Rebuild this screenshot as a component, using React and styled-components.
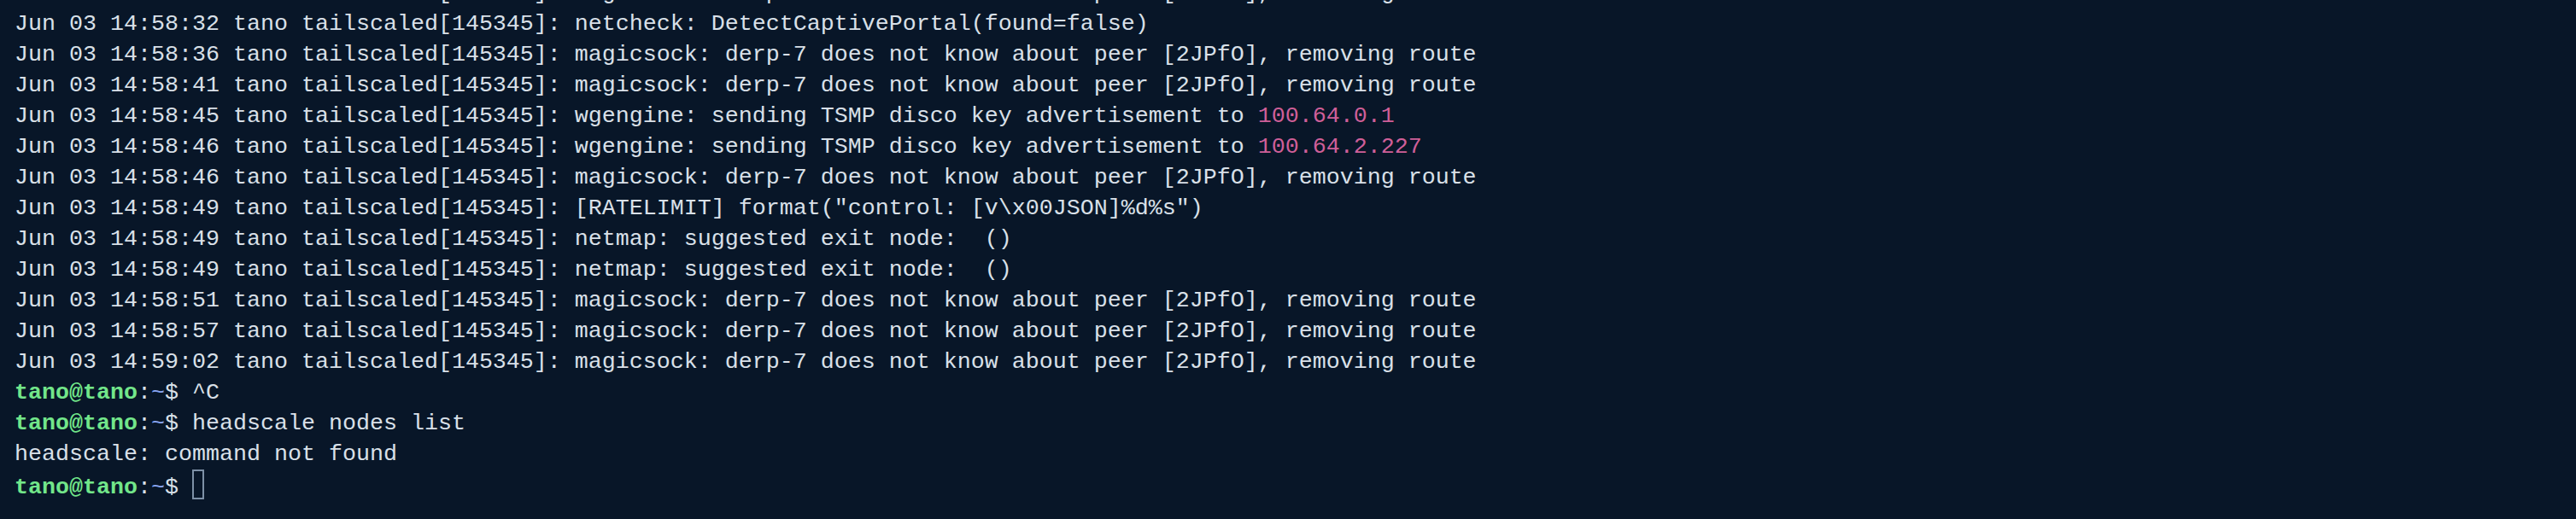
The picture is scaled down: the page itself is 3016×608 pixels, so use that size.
import styled, { createGlobalStyle } from "styled-components";

const GlobalStyle = createGlobalStyle`
  html, body {
    margin: 0;
    padding: 0;
    height: 608px;
    overflow: hidden;
    background: #081628;
  }
`;

const Terminal = styled.div`
  width: 3016px;
  height: 608px;
  box-sizing: border-box;
  background: #081628;
  color: #d9e0e8;
  font-family: "Liberation Mono", "DejaVu Sans Mono", monospace;
  font-size: 26.67px;
  line-height: 36px;
  padding: 0 0 22px 17px;
  display: flex;
  flex-direction: column;
  justify-content: flex-end;
  overflow: hidden;
`;

const Line = styled.div`
  white-space: pre;
  height: 36px;
  flex-shrink: 0;
`;

const Ip = styled.span`
  color: #cf5f98;
`;

const User = styled.span`
  color: #72e68a;
  font-weight: bold;
`;

const Path = styled.span`
  color: #8aa6f2;
`;

const Cursor = styled.span`
  display: inline-block;
  width: 14px;
  height: 35px;
  box-sizing: border-box;
  border: 2px solid #7d90a6;
  vertical-align: -7px;
`;

const prefix = (t) => `Jun 03 ${t} tano tailscaled[145345]: `;
const derp = "magicsock: derp-7 does not know about peer [2JPfO], removing route";

const logs = [
  { t: "14:58:28", msg: derp },
  { t: "14:58:32", msg: "netcheck: DetectCaptivePortal(found=false)" },
  { t: "14:58:36", msg: derp },
  { t: "14:58:41", msg: derp },
  { t: "14:58:45", msg: "wgengine: sending TSMP disco key advertisement to ", ip: "100.64.0.1" },
  { t: "14:58:46", msg: "wgengine: sending TSMP disco key advertisement to ", ip: "100.64.2.227" },
  { t: "14:58:46", msg: derp },
  { t: "14:58:49", msg: '[RATELIMIT] format("control: [v\\x00JSON]%d%s")' },
  { t: "14:58:49", msg: "netmap: suggested exit node:  ()" },
  { t: "14:58:49", msg: "netmap: suggested exit node:  ()" },
  { t: "14:58:51", msg: derp },
  { t: "14:58:57", msg: derp },
  { t: "14:59:02", msg: derp },
];

const Prompt = () => (
  <>
    <User>tano@tano</User>:<Path>~</Path>${" "}
  </>
);

export default function App() {
  return (
    <>
      <GlobalStyle />
      <Terminal>
        {logs.map((l, i) => (
          <Line key={i}>
            {prefix(l.t)}
            {l.msg}
            {l.ip && <Ip>{l.ip}</Ip>}
          </Line>
        ))}
        <Line>
          <Prompt />^C
        </Line>
        <Line>
          <Prompt />headscale nodes list
        </Line>
        <Line>headscale: command not found</Line>
        <Line>
          <Prompt />
          <Cursor />
        </Line>
      </Terminal>
    </>
  );
}
